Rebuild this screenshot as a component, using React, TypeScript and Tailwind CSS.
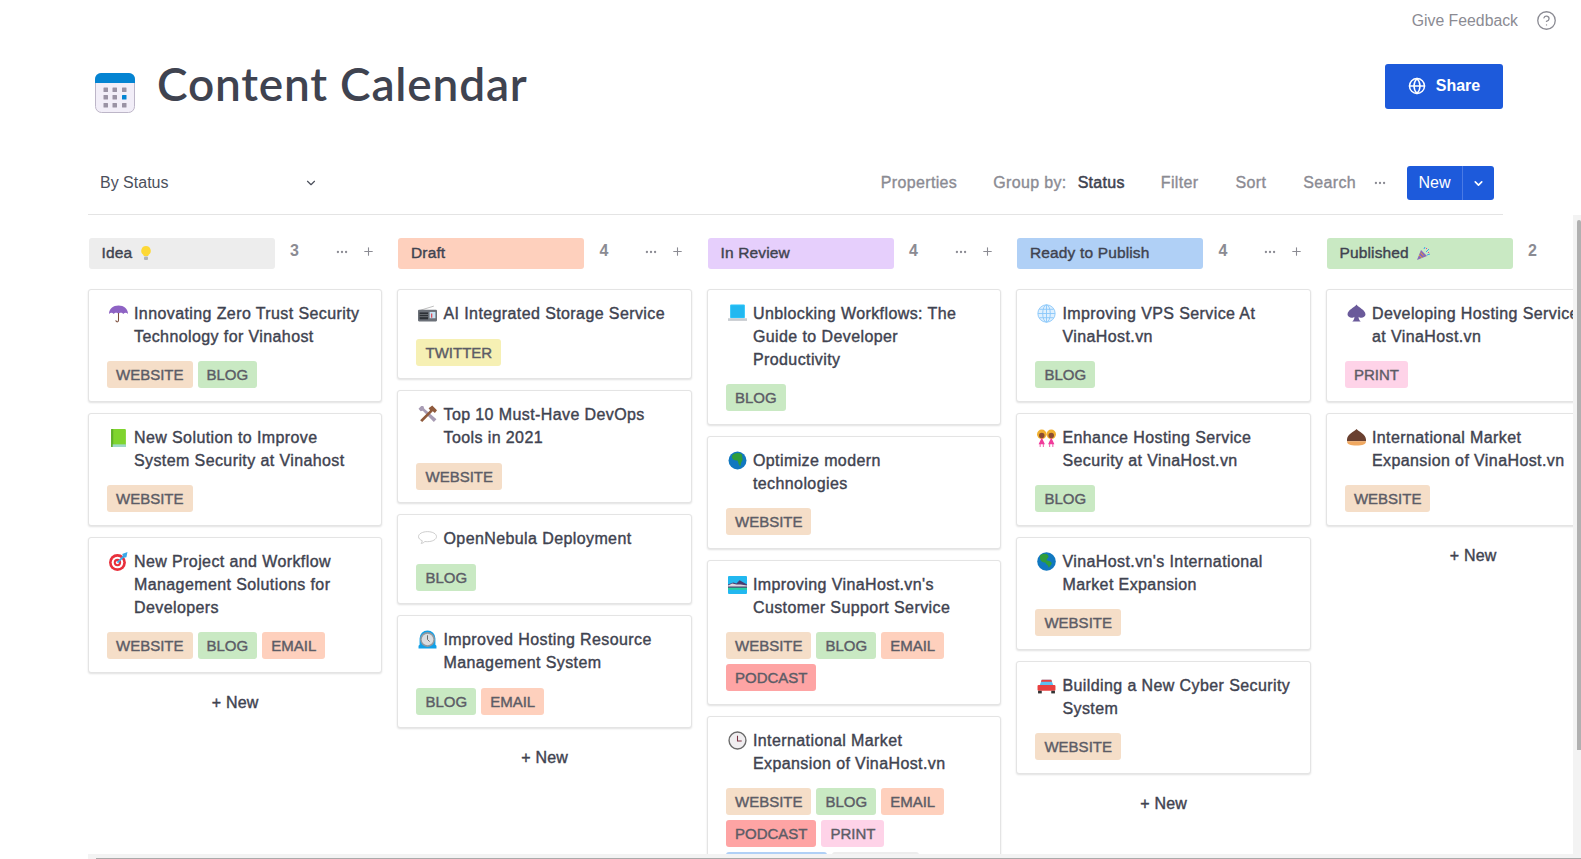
import { ChevronDown, Globe, CircleHelp, Ellipsis, Plus } from "lucide-react";

type Tag = "WEBSITE" | "BLOG" | "EMAIL" | "PODCAST" | "PRINT" | "TWITTER" | "A" | "B";

const tagColor: Record<Tag, string> = {
  WEBSITE: "bg-[#f5dec8]",
  BLOG: "bg-[#c9e9c3]",
  EMAIL: "bg-[#fed0bd]",
  PODCAST: "bg-[#fea4a4]",
  PRINT: "bg-[#fed3e8]",
  TWITTER: "bg-[#f6f0b4]",
  A: "bg-[#b0d0f6]",
  B: "bg-[#ededed]",
};

function Emoji({ name }: { name: string }) {
  const icons: Record<string, React.ReactNode> = {
    umbrella: (
      <>
        <path d="M0 9.500C0 4.500 4 1.500 9 1.500s9 3 9 8c-1.500-1.500-3-1.500-4.500 0-1-1.500-3.500-1.500-4.500 0-1-1.500-3.500-1.500-4.500 0C3 8 1.500 8 0 9.500z" fill="#8e63c4" />
        <path d="M9 8.500v7c0 2-2.500 2-2.500 0" stroke="#7a4b3a" strokeWidth="1" fill="none" />
      </>
    ),
    book: (
      <>
        <rect x="2" y="1" width="14" height="17" rx="1" fill="#7fd42e" />
        <rect x="2" y="1" width="2" height="17" fill="#5fae2a" />
        <rect x="3.500" y="15.500" width="12.500" height="2.500" fill="#9fd8c8" />
      </>
    ),
    target: (
      <>
        <circle cx="8" cy="10" r="8" fill="#e8303c" />
        <circle cx="8" cy="10" r="5.500" fill="#fff" />
        <circle cx="8" cy="10" r="3.500" fill="#e8303c" />
        <circle cx="8" cy="10" r="1.500" fill="#fff" />
        <path d="M8 10l7-7" stroke="#3aa8e8" strokeWidth="1.800" />
        <path d="M12.500 2l5-2-1 5-2.500.5z" fill="#3aa8e8" />
      </>
    ),
    radio: (
      <>
        <path d="M2 6L15 2" stroke="#aaa" strokeWidth=".7" />
        <rect x="0" y="5.500" width="18" height="11" rx="1" fill="#6b7078" />
        <rect x="1.500" y="8" width="8" height="6.500" fill="#2c3036" />
        <path d="M1.500 10h8M1.500 12h8" stroke="#8a8e94" strokeWidth=".6" />
        <rect x="11" y="7.500" width="5.500" height="6" fill="#c8e4f4" />
        <rect x="12.500" y="9" width="1" height="4" fill="#e8303c" />
      </>
    ),
    tools: (
      <>
        <path d="M3 1L.5 3.500 2.500 6l2-.5L15 16l2.500-2.500L6 3.500 5 1z" fill="#a89cb4" />
        <path d="M2 14.500L11.500 5 10 3l3.500-2.500L18 5l-2 2.500-2-1.500L4 16z" fill="#8f5a3c" />
      </>
    ),
    bubble: (
      <path d="M9 2.500c4.700 0 8.500 2 8.500 4.700S13.700 12 9 12c-1 0-1.700 0-2.500-.2-1 1-2 1.800-3.500 1.800.700-.7 1-1.600 1-2.500C2 10.300.5 9 .5 7.200.5 4.500 4.300 2.500 9 2.500z" fill="#fff" stroke="#bbb" strokeWidth=".7" />
    ),
    mantel: (
      <>
        <path d="M.5 17.500V15l1-1V8a7.500 7.500 0 0 1 15 0v6l1 1v2.500z" fill="#10a0e8" />
        <circle cx="9" cy="9" r="7" fill="#8f98a0" />
        <circle cx="9" cy="9" r="5.500" fill="#dadde0" />
        <path d="M9 5v4l2 2" stroke="#555" strokeWidth=".8" fill="none" />
      </>
    ),
    laptop: (
      <>
        <rect x="2" y="0.500" width="14" height="13" rx="1" fill="#28c4fa" />
        <rect x="3" y="1.500" width="12" height="11" fill="#22b8f0" />
        <path d="M0 13.500h18v2.500H0z" fill="#c8ccd0" />
      </>
    ),
    africa: (
      <>
        <circle cx="9" cy="9" r="8.500" fill="#1178c0" />
        <path d="M4 4c2-2 6-3 9-1 1 2 0 3 1 5-1 2-2 3-2 6-2 0-2-3-3-5-3 0-6-1-5-5z" fill="#2f9d3a" />
      </>
    ),
    landscape: (
      <>
        <rect x="0" y="1" width="18" height="17" rx="1" fill="#22b8f0" />
        <path d="M0 9l5-2 3 1 3-3 7 4v4H0z" fill="#4a3d70" />
        <path d="M0 10l4-2 4 1 4 0 6 1v1H0z" fill="#fff" opacity=".8" />
        <rect x="0" y="12" width="18" height="2" fill="#28d0a0" />
      </>
    ),
    clock: (
      <>
        <circle cx="9" cy="9" r="8" fill="#f0eef0" stroke="#6a6a6a" strokeWidth="1.300" />
        <path d="M9 4.500V9.500h4" stroke="#7a3040" strokeWidth="1" fill="none" />
      </>
    ),
    globe: (
      <g stroke="#8cc8fa" strokeWidth=".9" fill="#dff0fe">
        <circle cx="9" cy="9" r="8.200" />
        <ellipse cx="9" cy="9" rx="3.600" ry="8.200" />
        <path d="M9 1v16M1 9h16M2.300 5h13.400M2.300 13h13.400" />
      </g>
    ),
    girls: (
      <>
        <circle cx="4.500" cy="6" r="4.500" fill="#f0b030" />
        <circle cx="13.500" cy="6" r="4.500" fill="#f0b030" />
        <circle cx="4.500" cy="7" r="2.600" fill="#8a4c30" />
        <circle cx="13.500" cy="7" r="2.600" fill="#8a4c30" />
        <path d="M1.500 15.500l3-6.500 3 6.500zM10.500 15.500l3-6.500 3 6.500z" fill="#f03c9c" />
        <path d="M3 18v-3M6 18v-3M12 18v-3M15 18v-3" stroke="#f03c9c" strokeWidth=".8" />
      </>
    ),
    americas: (
      <>
        <circle cx="9" cy="9" r="8.800" fill="#1178c0" />
        <path d="M3 3c3-2 7-2 8 1 0 2-2 2-2 4 2 0 5 1 5 3-1 2-2 3-3 4 0-3-3-3-3-5-3 0-6-2-5-7z" fill="#2f9d3a" />
      </>
    ),
    car: (
      <>
        <path d="M4.500 3.500h9l2 5.500H2.500z" fill="#5cc0f0" />
        <path d="M4.500 3.500h9l.8 2H3.700z" fill="#e84040" />
        <rect x="0.500" y="8.500" width="17" height="5.500" rx="1" fill="#e84040" />
        <rect x="1" y="14" width="3.500" height="2.500" fill="#333" />
        <rect x="13.500" y="14" width="3.500" height="2.500" fill="#333" />
      </>
    ),
    spade: (
      <path d="M9 .5c2 3 8.500 5 8.500 9.500 0 3-5 4-6.500 2 0 2 .5 3 2 4.500H5c1.500-1.500 2-2.500 2-4.500-1.500 2-6.500 1-6.500-2C.5 5.500 7 3.500 9 .5z" fill="#6a5a9a" />
    ),
    chestnut: (
      <>
        <path d="M9 1c2 2.500 9 5 9 10v1.500H0V11c0-5 7-7.500 9-10z" fill="#6a4030" />
        <path d="M0 12.500h18c0 3-3 4-9 4s-9-1-9-4z" fill="#f0a860" />
      </>
    ),
  };
  return (
    <svg viewBox="0 0 18 18" className="mt-[1px] ml-[2px] h-[19px] w-[19px] shrink-0">
      {icons[name]}
    </svg>
  );
}

type Card = { emoji: string; title: string[]; tags: Tag[] };

type Column = {
  name: string;
  color: string;
  count: number;
  emoji?: string;
  cards: Card[];
  addNew?: boolean;
};

const columns: Column[] = [
  {
    name: "Idea",
    color: "bg-[#ededed]",
    count: 3,
    emoji: "bulb",
    addNew: true,
    cards: [
      { emoji: "umbrella", title: ["Innovating Zero Trust Security", "Technology for Vinahost"], tags: ["WEBSITE", "BLOG"] },
      { emoji: "book", title: ["New Solution to Improve", "System Security at Vinahost"], tags: ["WEBSITE"] },
      { emoji: "target", title: ["New Project and Workflow", "Management Solutions for", "Developers"], tags: ["WEBSITE", "BLOG", "EMAIL"] },
    ],
  },
  {
    name: "Draft",
    color: "bg-[#fed0bd]",
    count: 4,
    addNew: true,
    cards: [
      { emoji: "radio", title: ["AI Integrated Storage Service"], tags: ["TWITTER"] },
      { emoji: "tools", title: ["Top 10 Must-Have DevOps", "Tools in 2021"], tags: ["WEBSITE"] },
      { emoji: "bubble", title: ["OpenNebula Deployment"], tags: ["BLOG"] },
      { emoji: "mantel", title: ["Improved Hosting Resource", "Management System"], tags: ["BLOG", "EMAIL"] },
    ],
  },
  {
    name: "In Review",
    color: "bg-[#e6cffc]",
    count: 4,
    cards: [
      { emoji: "laptop", title: ["Unblocking Workflows: The", "Guide to Developer", "Productivity"], tags: ["BLOG"] },
      { emoji: "africa", title: ["Optimize modern", "technologies"], tags: ["WEBSITE"] },
      { emoji: "landscape", title: ["Improving VinaHost.vn's", "Customer Support Service"], tags: ["WEBSITE", "BLOG", "EMAIL", "PODCAST"] },
      { emoji: "clock", title: ["International Market", "Expansion of VinaHost.vn"], tags: ["WEBSITE", "BLOG", "EMAIL", "PODCAST", "PRINT", "A", "B"] },
    ],
  },
  {
    name: "Ready to Publish",
    color: "bg-[#b0d0f6]",
    count: 4,
    addNew: true,
    cards: [
      { emoji: "globe", title: ["Improving VPS Service At", "VinaHost.vn"], tags: ["BLOG"] },
      { emoji: "girls", title: ["Enhance Hosting Service", "Security at VinaHost.vn"], tags: ["BLOG"] },
      { emoji: "americas", title: ["VinaHost.vn's International", "Market Expansion"], tags: ["WEBSITE"] },
      { emoji: "car", title: ["Building a New Cyber Security", "System"], tags: ["WEBSITE"] },
    ],
  },
  {
    name: "Published",
    color: "bg-[#c9e9c3]",
    count: 2,
    emoji: "party",
    addNew: true,
    cards: [
      { emoji: "spade", title: ["Developing Hosting Service", "at VinaHost.vn"], tags: ["PRINT"] },
      { emoji: "chestnut", title: ["International Market", "Expansion of VinaHost.vn"], tags: ["WEBSITE"] },
    ],
  },
];

function TagChip({ tag }: { tag: Tag }) {
  const isBlank = tag === "A" || tag === "B";
  return (
    <span
      className={`inline-flex h-[27px] items-center rounded-[3px] px-[9px] text-[15px] leading-none text-[#5c5c66] [-webkit-text-stroke:0.4px_#5c5c66] ${tagColor[tag]} ${
        tag === "A" ? "w-[101px]" : tag === "B" ? "w-[87px]" : ""
      }`}
    >
      {isBlank ? "" : tag}
    </span>
  );
}

function BoardCard({ card }: { card: Card }) {
  return (
    <div className="rounded-[3px] border border-[#e4e4e4] bg-white px-[18px] pt-[13px] pb-[12.500px] shadow-[0_1px_2px_rgba(0,0,0,0.12)]">
      <div className="flex gap-[6px]">
        <Emoji name={card.emoji} />
        <div className="text-[16px] leading-[22.800px] tracking-[0.4px] whitespace-nowrap text-[#3f4350] [-webkit-text-stroke:0.4px_#3f4350]">
          {card.title.map((line) => (
            <div key={line}>{line}</div>
          ))}
        </div>
      </div>
      <div className="mt-[12.900px] flex flex-wrap gap-x-[5px] gap-y-[5px]">
        {card.tags.map((t, i) => (
          <TagChip key={`${t}-${i}`} tag={t} />
        ))}
      </div>
    </div>
  );
}

function BoardColumn({ column }: { column: Column }) {
  return (
    <div className="w-[294.300px] shrink-0">
      <div className="flex h-[31px] items-center">
        <div className={`ml-px flex h-[31px] w-[186px] items-center gap-[7px] rounded-[3px] pl-[12.500px] pb-[2px] text-[15.500px] tracking-[0.15px] text-[#3f4350] [-webkit-text-stroke:0.4px_#3f4350] ${column.color}`}>
          {column.name}
          {column.emoji && (
            <svg viewBox="0 0 14 14" className="h-[14px] w-[14px]">
              {column.emoji === "bulb" ? (
                <>
                  <path d="M7 0a4.800 4.800 0 0 1 3 8.500c-.6.5-.7 1-.7 1.500H4.700c0-.5-.1-1-.7-1.500A4.800 4.800 0 0 1 7 0z" fill="#fdd835" />
                  <rect x="5" y="10.500" width="4" height="3.500" rx="1" fill="#b0b4b8" />
                </>
              ) : (
                <>
                  <path d="M1 14L5 4l6 6z" fill="#8a6ab8" />
                  <path d="M3 9l3 3M4.500 6.500l3 3" stroke="#e8a030" strokeWidth="1" />
                  <path d="M8 3l1-2M10 6l3-3M11 9l3-1" stroke="#3aa8e8" strokeWidth="1" />
                  <path d="M10 2l1 1M12 6l1 1" stroke="#e84090" strokeWidth="1" />
                </>
              )}
            </svg>
          )}
        </div>
        <span className="ml-[15px] -translate-y-[3px] text-[16px] font-bold text-[#8b8b93]">{column.count}</span>
        {column.count !== 2 && (
          <div className="ml-[36px] flex -translate-y-[2px] items-center gap-[13px] text-[#8b8b93]">
            <Ellipsis size={14} />
            <Plus size={13} />
          </div>
        )}
      </div>
      <div className="mt-[20px] flex flex-col gap-[11px]">
        {column.cards.map((c) => (
          <BoardCard key={c.title[0]} card={c} />
        ))}
      </div>
      {column.addNew && (
        <div className="mt-[18px] text-center text-[16px] tracking-[0.2px] text-[#3f4350] [-webkit-text-stroke:0.4px_#3f4350]">+ New</div>
      )}
    </div>
  );
}

export default function App() {
  return (
    <div className="relative h-[859px] w-[1581px] overflow-hidden bg-white font-['Liberation_Sans',Arial,sans-serif]">
      <div className="flex h-[41px] items-center justify-end gap-[18px] pr-[24px] text-[#8b8b93]">
        <span className="text-[15.800px]">Give Feedback</span>
        <CircleHelp size={21} strokeWidth={1.500} />
      </div>

      <div className="flex items-start justify-between pl-[95px] pr-[78px]">
        <div className="flex items-start">
          <svg viewBox="0 0 40 40" className="mt-[32px] h-[40px] w-[40px]">
            <rect x="0.500" y="0.500" width="39" height="39" rx="6" fill="#f2eef8" stroke="#bdb6c8" />
            <path d="M0 10V6a6 6 0 0 1 6-6h28a6 6 0 0 1 6 6v4z" fill="#0484d2" />
            {[14.500, 22, 30].flatMap((y) =>
              [8.500, 17.500, 27].map((x) => (
                <rect key={`${x}-${y}`} x={x} y={y} width="4.500" height="4.500" rx=".5" fill={x === 27 && y === 22 ? "#0484d2" : "#9a92a4"} />
              )),
            )}
          </svg>
          <h1 className="ml-[22px] mt-[8px] font-['Lato',sans-serif] text-[46px] leading-[1.500] font-semibold tracking-[0.8px] text-[#3f4350]">
            Content Calendar
          </h1>
        </div>
        <button className="mt-[23px] flex h-[45px] w-[118px] items-center justify-center gap-[10px] rounded-[3px] bg-[#1d5adb] pb-[2px] text-[16px] font-bold text-white">
          <Globe size={18} />
          Share
        </button>
      </div>

      <div className="ml-[88px] mr-[78px] mt-[35px] flex h-[62px] items-center justify-between border-b border-[#e4e4e4] pb-[1px] pr-[9px] text-[16px]">
        <div className="flex w-[230px] items-center justify-between pl-[12px] text-[#4c505c]">
          By Status
          <ChevronDown size={14} />
        </div>
        <div className="flex items-center tracking-[0.35px] text-[#8b8b93] [-webkit-text-stroke:0.35px_#8b8b93]">
          <span>Properties</span>
          <span className="ml-[36px]">Group by:</span>
          <span className="ml-[11px] tracking-[0.3px] text-[#3f4350] [-webkit-text-stroke:0.5px_#3f4350]">Status</span>
          <span className="ml-[36px]">Filter</span>
          <span className="ml-[37px]">Sort</span>
          <span className="ml-[37px]">Search</span>
          <Ellipsis size={14} className="ml-[17px]" />
          <div className="ml-[20px] flex h-[34px] items-center rounded-[3px] bg-[#1d5adb] tracking-normal text-white [-webkit-text-stroke:0]">
            <span className="w-[55px] text-center">New</span>
            <span className="flex h-full w-[32px] items-center justify-center border-l border-[#4a7ae4]">
              <ChevronDown size={13} strokeWidth={3} />
            </span>
          </div>
        </div>
      </div>

      <div className="ml-[88px] mt-[23px] flex items-start gap-[15.200px]">
        {columns.map((c) => (
          <BoardColumn key={c.name} column={c} />
        ))}
      </div>

      <div className="absolute right-0 top-[215px] bottom-0 w-[8px] bg-[#f3f3f3]">
        <div className="ml-auto mt-[5px] h-[530px] w-[4px] rounded-t-[2px] bg-[#b0b0b0]" />
      </div>
      <div className="absolute right-0 left-[88px] bottom-0 h-[5px] bg-[#f3f3f3]">
        <div className="mt-[4px] ml-[8px] h-px bg-[#aaaaaa]" />
      </div>
    </div>
  );
}
